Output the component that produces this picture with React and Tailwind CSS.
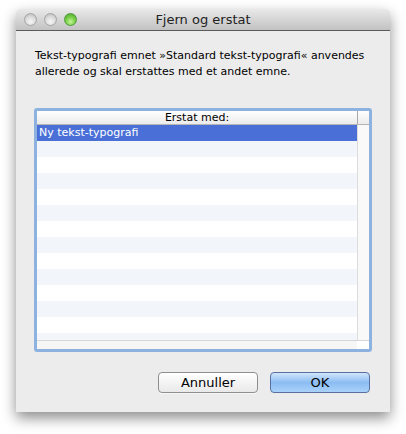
import React from 'react'

const ROWS = 13

function TrafficLight({ green }) {
  return (
    <span
      className={`block w-[13px] h-[13px] rounded-full border ${
        green
          ? 'border-[#4f9a3a] bg-[radial-gradient(circle_at_50%_70%,#c6f59a_0%,#7dd24c_45%,#4a9f2a_100%)]'
          : 'border-[#a5a5a5] bg-[radial-gradient(circle_at_50%_70%,#f6f6f6_0%,#dcdcdc_50%,#b4b4b4_100%)]'
      }`}
    />
  )
}

export default function App() {
  return (
    <div className="w-[406px] h-[434px] bg-white pt-[9px] pl-[16px] font-['DejaVu_Sans',sans-serif]">
      <div className="w-[374px] h-[403px] flex flex-col rounded-t-[5px] bg-[#ececec] shadow-[0_6px_14px_rgba(0,0,0,0.45)] overflow-hidden">

        {/* title bar */}
        <div className="relative h-[22px] flex items-center justify-center bg-gradient-to-b from-[#e9e9e9] to-[#c2c2c2] border-b border-[#5a5a5a]">
          <div className="absolute left-[8px] top-[4px] flex gap-[7px]">
            <TrafficLight />
            <TrafficLight />
            <TrafficLight green />
          </div>
          <span className="text-[13px] text-[#222] leading-none">Fjern og erstat</span>
        </div>

        {/* message */}
        <p className="mt-[17px] ml-[19px] mr-[14px] text-[11px] leading-[16px] text-black">
          Tekst-typografi emnet »Standard tekst-typografi« anvendes allerede og skal erstattes med et andet emne.
        </p>

        {/* table */}
        <div className="mt-[28px] ml-[18px] w-[338px] h-[244px] rounded-[3px] border-[3px] border-[#8eb2e0] bg-white flex flex-col">
          <div className="flex h-[14px] bg-gradient-to-b from-white to-[#ebebeb] border-b border-[#b5b5b5]">
            <div className="flex-1 text-center text-[11px] leading-[13px] text-black">Erstat med:</div>
            <div className="w-[12px] border-l border-[#a8a8a8]" />
          </div>
          <div className="flex flex-1 min-h-0">
            <div className="flex-1 flex flex-col overflow-hidden">
              <div className="h-[16px] shrink-0 bg-[#4a70d8] text-white text-[11px] leading-[16px] pl-[2px]">Ny tekst-typografi</div>
              {Array.from({ length: ROWS }).map((_, i) => (
                <div key={i} className={`h-[16px] shrink-0 ${i % 2 === 0 ? 'bg-[#f2f5fa]' : 'bg-white'}`} />
              ))}
            </div>
            <div className="w-[12px] border-l border-[#dcdcdc] bg-[#f9f9f9]" />
          </div>
          <div className="flex h-[9px] border-t border-[#d6d6d6]">
            <div className="flex-1 bg-[#f6f6f6]" />
            <div className="w-[12px] bg-white" />
          </div>
        </div>

        {/* buttons */}
        <div className="mt-[20px] flex justify-end gap-[12px] pr-[20px]">
          <button className="w-[100px] h-[21px] rounded-[4px] border border-[#8f8f8f] bg-gradient-to-b from-white to-[#e9e9e9] text-[13px] text-black leading-none shadow-[0_1px_0_rgba(255,255,255,0.6)]">
            Annuller
          </button>
          <button className="w-[100px] h-[21px] rounded-[4px] border border-[#5a6fa0] bg-gradient-to-b from-[#d2e6fb] via-[#8bbcf2] to-[#a9d2fa] text-[13px] text-black leading-none">
            OK
          </button>
        </div>
      </div>
    </div>
  )
}
